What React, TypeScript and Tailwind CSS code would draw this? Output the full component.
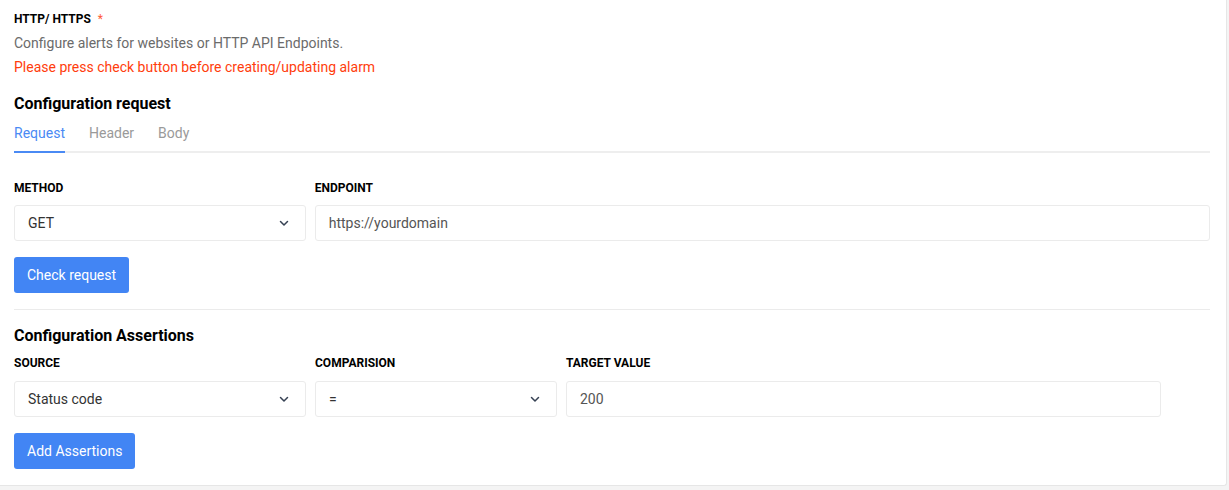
import React from 'react';

const Chevron = () => (
  <svg width="10" height="10" viewBox="0 0 10 10" fill="none" className="text-gray-700">
    <path d="M1.5 3.5 L5 7 L8.5 3.5" stroke="currentColor" strokeWidth="1.5" strokeLinecap="round" strokeLinejoin="round" />
  </svg>
);

const Label: React.FC<{ children: React.ReactNode; loose?: boolean }> = ({ children, loose }) => (
  <div className={`text-[12px] font-bold text-black leading-4 ${loose ? 'mb-[10px]' : 'mb-[9px]'}`}>{children}</div>
);

const SelectBox: React.FC<{ value: string }> = ({ value }) => (
  <div className="h-9 border border-[#ebebeb] rounded-[3px] bg-white flex items-center justify-between pl-[13px] pr-[16px] text-[14px] text-[#333]">
    <span>{value}</span>
    <Chevron />
  </div>
);

const InputBox: React.FC<{ value: string }> = ({ value }) => (
  <div className="h-9 border border-[#ebebeb] rounded-[3px] bg-white flex items-center pl-[13px] text-[14px] text-[#555]">
    {value}
  </div>
);

const App: React.FC = () => {
  const tabs = ['Request', 'Header', 'Body'];

  return (
    <div className="min-h-[490px] bg-[#f4f4f4] font-['Roboto',sans-serif]">
      <div className="w-[1227px] bg-white border-r border-b border-[#e6e6e6] rounded-br-[3px] pl-[14px] pr-[16px] pt-[11px] pb-[16px]">
        <div className="flex items-center text-[12px] font-bold text-black leading-4">
          HTTP/ HTTPS <span className="text-[#ff5a36] ml-[7px] font-normal">*</span>
        </div>
        <div className="text-[14px] text-[#6b6b6b] mt-[6px] leading-5">
          Configure alerts for websites or HTTP API Endpoints.
        </div>
        <div className="text-[14px] text-[#ff3d0d] mt-[4px] leading-5">
          Please press check button before creating/updating alarm
        </div>

        <div className="text-[16px] font-bold text-black mt-[17px] leading-5">Configuration request</div>

        <div className="mt-[9px] flex border-b-2 border-[#eeeeee]">
          {tabs.map((t, i) => (
            <div
              key={t}
              className={`text-[14px] pb-[8px] -mb-[2px] mr-[24px] leading-5 ${
                i === 0 ? 'text-[#4a8af4] border-b-2 border-[#4a8af4]' : 'text-[#9a9a9a]'
              }`}
            >
              {t}
            </div>
          ))}
        </div>

        <div className="mt-[27px] flex gap-[9px]">
          <div className="w-[292px]">
            <Label>METHOD</Label>
            <SelectBox value="GET" />
          </div>
          <div className="w-[896px]">
            <Label>ENDPOINT</Label>
            <InputBox value="https://yourdomain" />
          </div>
        </div>

        <button className="mt-[16px] h-9 px-[13px] bg-[#4285f4] text-white text-[14px] rounded-[3px]">
          Check request
        </button>

        <div className="mt-[16px] w-[1196px] border-t border-[#ebebeb]" />

        <div className="text-[16px] font-bold text-black mt-[16px] leading-5">Configuration Assertions</div>

        <div className="mt-[9px] flex gap-[9px]">
          <div className="w-[292px]">
            <Label loose>SOURCE</Label>
            <SelectBox value="Status code" />
          </div>
          <div className="w-[242px]">
            <Label loose>COMPARISION</Label>
            <SelectBox value="=" />
          </div>
          <div className="w-[595px]">
            <Label loose>TARGET VALUE</Label>
            <InputBox value="200" />
          </div>
        </div>

        <button className="mt-[16px] h-9 px-[13px] bg-[#4285f4] text-white text-[14px] rounded-[3px]">
          Add Assertions
        </button>
      </div>
    </div>
  );
};

export default App;
